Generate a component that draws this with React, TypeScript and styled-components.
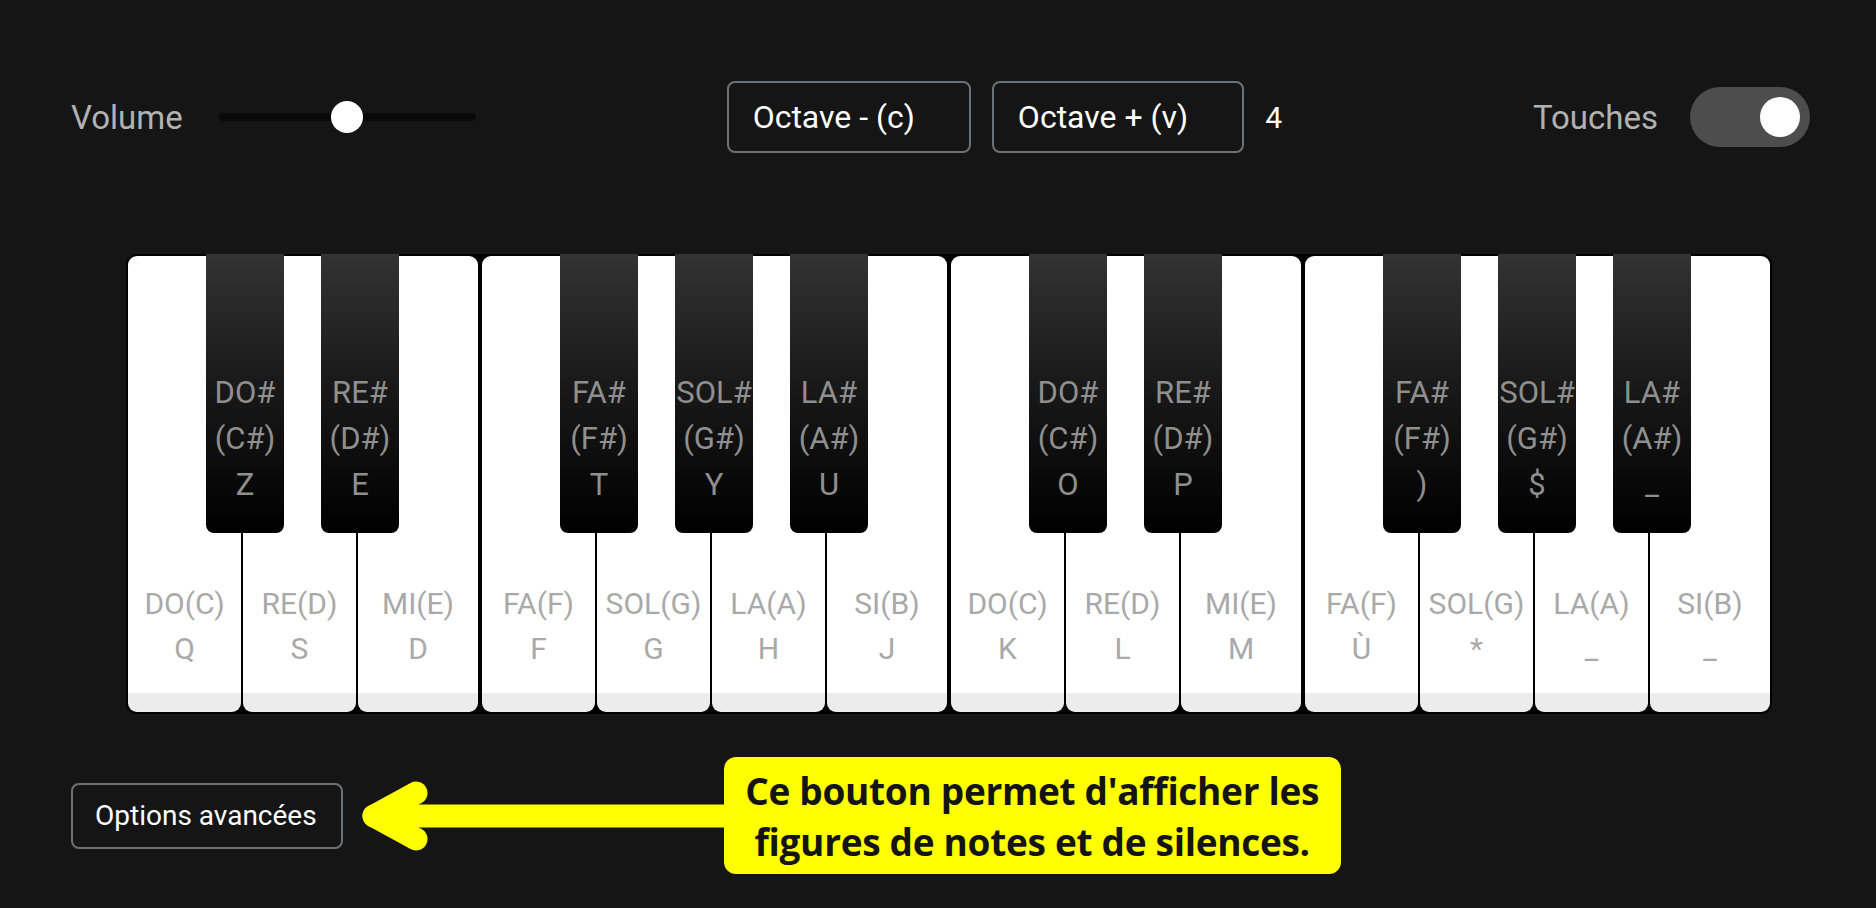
import React, { useState } from 'react';
import styled, { createGlobalStyle } from 'styled-components';

const GlobalStyle = createGlobalStyle`
  html, body {
    margin: 0;
    padding: 0;
    background: #151515;
  }
  body {
    font-family: Roboto, "Liberation Sans", sans-serif;
    color: #fff;
  }
`;

const Page = styled.div`
  min-height: 908px;
  box-sizing: border-box;
  padding: 81px 66px 0 71px;
`;

const Controls = styled.div`
  display: flex;
  justify-content: space-between;
  align-items: center;
  height: 72px;
`;

const ControlGroup = styled.div<{ $gap: number }>`
  display: flex;
  align-items: center;
  gap: ${p => p.$gap}px;
`;

const ControlLabel = styled.span`
  font-size: 33px;
  color: #b1b1b1;
`;

const VolumeSlider = styled.input.attrs({ type: 'range' })`
  -webkit-appearance: none;
  appearance: none;
  width: 257px;
  height: 8px;
  margin: 0;
  border-radius: 4px;
  background: #0a0a0a;
  outline: none;

  &::-webkit-slider-thumb {
    -webkit-appearance: none;
    appearance: none;
    width: 32px;
    height: 32px;
    border-radius: 50%;
    background: #fff;
    border: none;
  }
`;

const OutlineButton = styled.button<{ $size: number; $pad: string; $height: number }>`
  height: ${p => p.$height}px;
  box-sizing: border-box;
  padding: ${p => p.$pad};
  border: 2px solid #6a7178;
  border-radius: 8px;
  background: transparent;
  color: #fff;
  font-family: Roboto, "Liberation Sans", sans-serif;
  font-size: ${p => p.$size}px;
  white-space: nowrap;
  cursor: pointer;
`;

const OctaveValue = styled.span`
  font-size: 30px;
  color: #fff;
`;

const Switch = styled.button<{ $on: boolean }>`
  position: relative;
  width: 120px;
  height: 60px;
  padding: 0;
  border: none;
  border-radius: 30px;
  background: #4d4d4d;
  cursor: pointer;

  &::after {
    content: '';
    position: absolute;
    top: 10px;
    left: ${p => (p.$on ? '70px' : '10px')};
    width: 40px;
    height: 40px;
    border-radius: 50%;
    background: #fff;
  }
`;

const Keyboard = styled.div`
  display: flex;
  gap: 4px;
  width: fit-content;
  margin: 101px 0 0 55px;
  padding: 2px;
  background: #000;
  border-radius: 10px;
`;

const Octave = styled.div`
  display: flex;
  gap: 2px;
`;

const WhiteKey = styled.div<{ $wide: boolean }>`
  position: relative;
  width: ${p => (p.$wide ? 120 : 113)}px;
  height: 456px;
  box-sizing: border-box;
  padding-bottom: 41px;
  border-radius: 9px;
  background: linear-gradient(to bottom, #fff calc(100% - 19px), #ececec calc(100% - 19px));
  display: flex;
  flex-direction: column;
  justify-content: flex-end;
  align-items: center;
  font-size: 30px;
  line-height: 45px;
  color: #a9a9a9;
  white-space: nowrap;
`;

const BlackKey = styled.div`
  position: absolute;
  z-index: 1;
  top: -2px;
  left: calc(100% - 35px);
  width: 78px;
  height: 279px;
  box-sizing: border-box;
  padding-bottom: 25px;
  border-radius: 0 0 8px 8px;
  background: linear-gradient(to bottom, #333 0%, #1a1a1a 45%, #000 100%);
  display: flex;
  flex-direction: column;
  justify-content: flex-end;
  align-items: center;
  font-size: 31px;
  line-height: 46px;
  color: #8f8f8f;
  white-space: nowrap;
`;

const BottomRow = styled.div`
  display: flex;
  align-items: center;
  margin-top: 43px;
`;

const Arrow = styled.svg`
  flex: none;
  margin-left: 19px;
  display: block;
`;

const Callout = styled.div`
  width: 617px;
  box-sizing: border-box;
  padding: 8px 0 7px;
  border-radius: 12px;
  background: #ffff00;
  color: #141414;
  font-family: "Open Sans", "Noto Sans", sans-serif;
  font-weight: 700;
  font-size: 37px;
  line-height: 51px;
  letter-spacing: -0.3px;
  text-align: center;
  white-space: nowrap;
`;

type Sharp = { name: string; en: string; key: string };
type Note = { name: string; key: string; sharp?: Sharp };

const octaves: Note[][] = [
  [
    { name: 'DO(C)', key: 'Q', sharp: { name: 'DO#', en: '(C#)', key: 'Z' } },
    { name: 'RE(D)', key: 'S', sharp: { name: 'RE#', en: '(D#)', key: 'E' } },
    { name: 'MI(E)', key: 'D' },
  ],
  [
    { name: 'FA(F)', key: 'F', sharp: { name: 'FA#', en: '(F#)', key: 'T' } },
    { name: 'SOL(G)', key: 'G', sharp: { name: 'SOL#', en: '(G#)', key: 'Y' } },
    { name: 'LA(A)', key: 'H', sharp: { name: 'LA#', en: '(A#)', key: 'U' } },
    { name: 'SI(B)', key: 'J' },
  ],
  [
    { name: 'DO(C)', key: 'K', sharp: { name: 'DO#', en: '(C#)', key: 'O' } },
    { name: 'RE(D)', key: 'L', sharp: { name: 'RE#', en: '(D#)', key: 'P' } },
    { name: 'MI(E)', key: 'M' },
  ],
  [
    { name: 'FA(F)', key: 'Ù', sharp: { name: 'FA#', en: '(F#)', key: ')' } },
    { name: 'SOL(G)', key: '*', sharp: { name: 'SOL#', en: '(G#)', key: '$' } },
    { name: 'LA(A)', key: '_', sharp: { name: 'LA#', en: '(A#)', key: '_' } },
    { name: 'SI(B)', key: '_' },
  ],
];

const App: React.FC = () => {
  const [volume, setVolume] = useState(50);
  const [octave, setOctave] = useState(4);
  const [showKeys, setShowKeys] = useState(true);

  return (
    <>
      <GlobalStyle />
      <Page>
        <Controls>
          <ControlGroup $gap={36}>
            <ControlLabel>Volume</ControlLabel>
            <VolumeSlider
              min={0}
              max={100}
              value={volume}
              onChange={e => setVolume(Number(e.target.value))}
            />
          </ControlGroup>

          <ControlGroup $gap={21}>
            <OutlineButton $size={32} $height={72} $pad="0 54px 0 24px" onClick={() => setOctave(o => o - 1)}>
              Octave - (c)
            </OutlineButton>
            <OutlineButton $size={32} $height={72} $pad="0 54px 0 24px" onClick={() => setOctave(o => o + 1)}>
              Octave + (v)
            </OutlineButton>
            <OctaveValue>{octave}</OctaveValue>
          </ControlGroup>

          <ControlGroup $gap={32}>
            <ControlLabel>Touches</ControlLabel>
            <Switch $on={showKeys} onClick={() => setShowKeys(s => !s)} aria-label="Touches" />
          </ControlGroup>
        </Controls>

        <Keyboard>
          {octaves.map((notes, i) => (
            <Octave key={i}>
              {notes.map((note, j) => (
                <WhiteKey key={j} $wide={j === notes.length - 1}>
                  <div>{note.name}</div>
                  <div>{showKeys ? note.key : ''}</div>
                  {note.sharp && (
                    <BlackKey>
                      <div>{note.sharp.name}</div>
                      <div>{note.sharp.en}</div>
                      <div>{showKeys ? note.sharp.key : ''}</div>
                    </BlackKey>
                  )}
                </WhiteKey>
              ))}
            </Octave>
          ))}
        </Keyboard>

        <BottomRow>
          <OutlineButton $size={28} $height={66} $pad="0 24px 0 22px">
            Options avancées
          </OutlineButton>
          <Arrow width="362" height="80" viewBox="0 0 362 80">
            <g stroke="#ffff00" strokeWidth="23" strokeLinecap="round" strokeLinejoin="round" fill="none">
              <path d="M54 17 L12 40 L54 63" />
              <path d="M12 40 L370 40" />
            </g>
          </Arrow>
          <Callout>
            Ce bouton permet d'afficher les
            <br />
            figures de notes et de silences.
          </Callout>
        </BottomRow>
      </Page>
    </>
  );
};

export default App;
